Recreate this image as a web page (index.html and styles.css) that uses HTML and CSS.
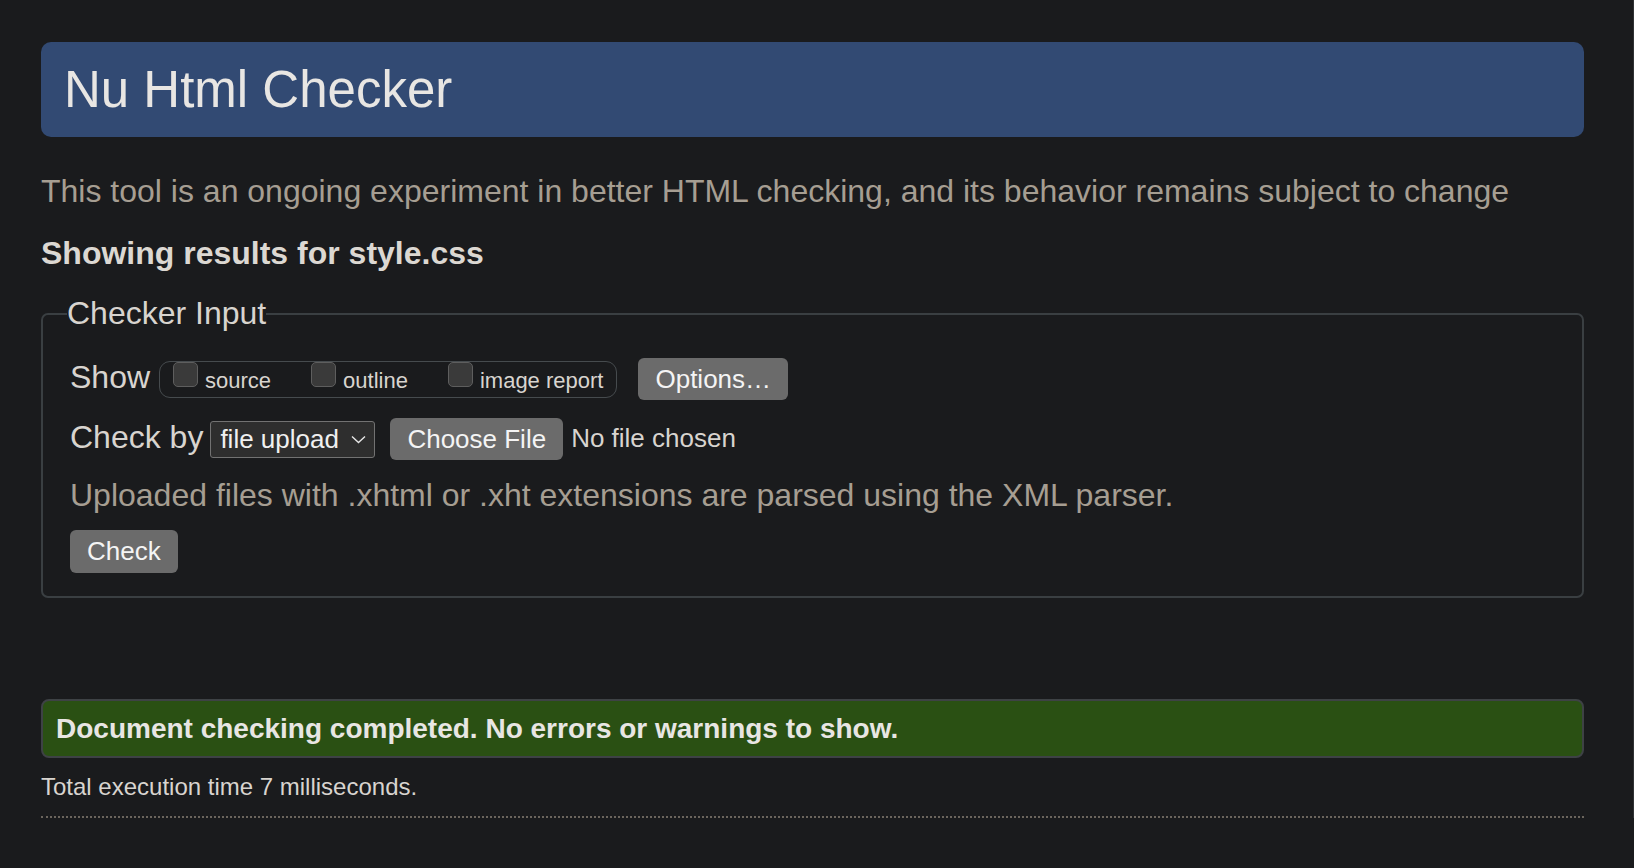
FILE: index.html
```html
<!DOCTYPE html>
<html lang="en">
<head>
<meta charset="utf-8">
<title>Nu Html Checker</title>
<link rel="stylesheet" href="styles.css">
</head>
<body>
<div class="page">
  <header class="banner"><h1>Nu Html Checker</h1></header>
  <p class="intro">This tool is an ongoing experiment in better HTML checking, and its behavior remains subject to change</p>
  <p class="showing">Showing results for style.css</p>
  <form class="checker-form" onsubmit="return false">
    <fieldset class="checker">
      <legend>Checker Input</legend>
      <div class="row row-show">
        <span class="lbl">Show</span>
        <span class="opts">
          <label class="opt"><input class="cb" type="checkbox"><span>source</span></label>
          <label class="opt"><input class="cb" type="checkbox"><span>outline</span></label>
          <label class="opt"><input class="cb" type="checkbox"><span>image report</span></label>
        </span>
        <button class="btn btn-options" type="button">Options…</button>
      </div>
      <div class="row row-by">
        <span class="lbl">Check by</span>
        <span class="select"><span>file upload</span><svg class="chev" width="15" height="9" viewBox="0 0 15 9"><polyline points="1,1.5 7.5,7.5 14,1.5" fill="none" stroke="#e6e6e6" stroke-width="1.4"/></svg></span>
        <span class="file"><button class="btn btn-file" type="button">Choose File</button><span class="nofile">No file chosen</span></span>
      </div>
      <p class="note">Uploaded files with .xhtml or .xht extensions are parsed using the XML parser.</p>
      <div class="row row-submit"><button class="btn btn-check" type="button">Check</button></div>
    </fieldset>
  </form>
  <div class="success"><p>Document checking completed. No errors or warnings to show.</p></div>
  <p class="time">Total execution time 7 milliseconds.</p>
  <hr class="dots">
</div>
</body>
</html>
```
FILE: styles.css
```css
html {
  background: #1a1b1d;
  border-right: 1px solid #303234;
}
body {
  margin: 0;
  font-family: "Liberation Sans", Arial, Helvetica, sans-serif;
  color: #d8d4cf;
}
.page {
  padding: 42px 49px 0 41px;
}
.banner {
  background: #324a73;
  border-radius: 10px;
  height: 95px;
  padding-left: 23px;
}
.banner h1 {
  margin: 0;
  font-size: 51px;
  line-height: 95px;
  font-weight: normal;
  color: #e8e6e3;
}
.intro {
  margin: 36px 0 0;
  font-size: 32px;
  line-height: 37px;
  color: #a69e92;
}
.showing {
  margin: 25px 0 0;
  font-size: 32px;
  line-height: 37px;
  font-weight: bold;
  color: #dcd8d2;
}
.checker-form {
  margin: 0;
}
.checker {
  margin: 23px 0 0;
  border: 2px solid #3a3f42;
  border-radius: 7px;
  padding: 26px 27px 23px 27px;
  min-width: 0;
}
.checker legend {
  padding: 0;
  margin-left: -3px;
  font-size: 32px;
  line-height: 37px;
  color: #d8d4cf;
}
.row {
  display: flex;
  align-items: flex-start;
}
.lbl {
  font-size: 32px;
  line-height: 37px;
  color: #d8d4cf;
  white-space: nowrap;
}
.row-show .lbl {
  margin-top: 1px;
}
.row-by .lbl {
  margin-top: 2px;
}
.opts {
  margin: 3px 0 0 9px;
  height: 37px;
  box-sizing: border-box;
  border: 1px solid #464b4e;
  border-radius: 11px;
  display: flex;
  gap: 40px;
  padding: 0 13px;
}
.opt {
  display: flex;
  align-items: flex-start;
}
.cb {
  appearance: none;
  -webkit-appearance: none;
  width: 25px;
  height: 25px;
  margin: 0 7px 0 0;
  box-sizing: border-box;
  background: #3a3a3a;
  border: 1px solid #5e5e5e;
  border-radius: 5px;
}
.opt span {
  font-size: 22px;
  line-height: 25px;
  margin-top: 5.5px;
  color: #d8d4cf;
  white-space: nowrap;
}
.btn {
  font-family: "Liberation Sans", Arial, Helvetica, sans-serif;
  font-size: 26px;
  color: #f4f4f4;
  background: #6b6b6b;
  border: 0;
  border-radius: 6px;
  padding: 0 17px;
  height: 42px;
  white-space: nowrap;
}
.btn-options {
  margin-left: 21px;
}
.row-by {
  margin-top: 17px;
}
.select {
  margin: 3.5px 0 0 7px;
  height: 37px;
  width: 165px;
  box-sizing: border-box;
  border: 1px solid #727272;
  border-radius: 3px;
  background: #2e2e2e;
  display: flex;
  align-items: center;
  justify-content: space-between;
  padding: 0 8px 0 9px;
  font-size: 26px;
  color: #f0f0f0;
  white-space: nowrap;
}
.chev {
  display: block;
}
.file {
  margin-left: 15px;
  display: flex;
  align-items: flex-start;
}
.btn-file {
  margin-top: 1px;
}
.nofile {
  margin: 6px 0 0 8px;
  font-size: 26px;
  line-height: 30px;
  color: #d8d4cf;
  white-space: nowrap;
}
.note {
  margin: 17px 0 0;
  font-size: 32px;
  line-height: 37px;
  color: #a69e92;
}
.row-submit {
  margin-top: 16px;
}
.btn-check {
  height: 43px;
}
.success {
  margin-top: 101px;
  border: 2px solid #3e4245;
  background: #2a5013;
  border-radius: 8px;
  padding: 0 13px;
}
.success p {
  margin: 0;
  font-size: 28px;
  line-height: 55px;
  font-weight: bold;
  color: #e8e6e3;
}
.time {
  margin: 15px 0 0;
  font-size: 24px;
  line-height: 28px;
  color: #d8d4cf;
}
.dots {
  margin: 15px 0 0;
  border: 0;
  border-top: 2px dotted #6b655d;
  height: 0;
}
```
